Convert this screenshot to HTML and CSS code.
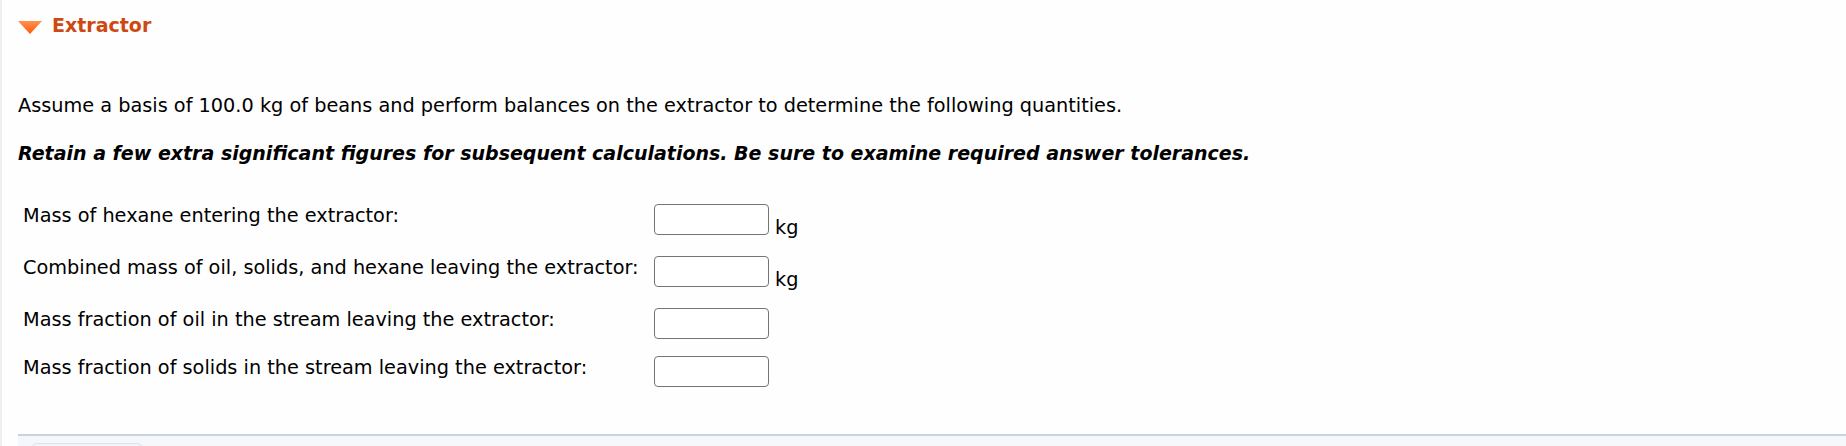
FILE: index.html
```html
<!DOCTYPE html>
<html lang="en">
  <head>
    <meta charset="UTF-8" />
    <meta name="viewport" content="width=device-width, initial-scale=1.0" />
    <link rel="stylesheet" href="styles.css">
    <title>Extractor</title>
  </head>

  <body>
    <main class="page">
      <h2 class="section__title">
        <svg class="section__arrow" width="24" height="13" viewBox="0 0 24 13">
          <defs>
            <linearGradient id="arrowFill" x1="0" y1="0" x2="0" y2="1">
              <stop offset="0" stop-color="#ff9250" />
              <stop offset="1" stop-color="#ff5a0a" />
            </linearGradient>
          </defs>
          <polygon points="0,0 24,0 12,13" fill="url(#arrowFill)" />
        </svg>
        Extractor
      </h2>

      <p class="question__text">
        Assume a basis of 100.0 kg of beans and perform balances on the extractor to determine the following quantities.
      </p>
      <p class="question__note">
        Retain a few extra significant figures for subsequent calculations. Be sure to examine required answer tolerances.
      </p>

      <div class="answers">
        <div class="answer">
          <label class="answer__label" for="q1">Mass of hexane entering the extractor:</label>
          <div class="answer__field">
            <input class="answer__input" id="q1" type="text" />
            <span class="answer__unit">kg</span>
          </div>
        </div>
        <div class="answer">
          <label class="answer__label" for="q2">Combined mass of oil, solids, and hexane leaving the extractor:</label>
          <div class="answer__field">
            <input class="answer__input" id="q2" type="text" />
            <span class="answer__unit">kg</span>
          </div>
        </div>
        <div class="answer">
          <label class="answer__label" for="q3">Mass fraction of oil in the stream leaving the extractor:</label>
          <div class="answer__field">
            <input class="answer__input" id="q3" type="text" />
          </div>
        </div>
        <div class="answer">
          <label class="answer__label" for="q4">Mass fraction of solids in the stream leaving the extractor:</label>
          <div class="answer__field">
            <input class="answer__input" id="q4" type="text" />
          </div>
        </div>
      </div>

      <div class="toolbar">
        <div class="toolbar__btn"></div>
      </div>
    </main>
  </body>
</html>
```

FILE: styles.css
```css
* {
  box-sizing: border-box;
}
html,
body {
  margin: 0;
  background-color: #fefefe;
}
body {
  font-family: Verdana, "DejaVu Sans", sans-serif;
  font-size: 19.3px;
  line-height: 23px;
  color: #000;
}
.page {
  border-left: 2px solid #efefef;
  padding: 14px 0 0 16px;
}
.section__title {
  display: flex;
  align-items: center;
  margin: 0;
  font-size: 19px;
  line-height: 23px;
  font-weight: bold;
  color: #cf4811;
}
.section__arrow {
  margin-right: 10px;
  margin-top: 3px;
}
.question__text {
  margin: 57px 0 0;
}
.question__note {
  margin: 25px 0 0;
  font-size: 19px;
  font-weight: bold;
  font-style: italic;
}
.answers {
  margin-top: 39px;
  padding-left: 5px;
}
.answer {
  display: flex;
  align-items: flex-start;
  margin-bottom: 17px;
}
.answer__label {
  width: 631px;
  flex-shrink: 0;
}
.answer__field {
  display: flex;
  align-items: flex-start;
}
.answer__input {
  width: 115px;
  height: 31px;
  margin: 0;
  border: 1px solid #747474;
  border-radius: 4px;
  background-color: #fff;
  font: inherit;
}
.answer__unit {
  margin: 12px 0 0 6px;
}
.toolbar {
  margin-top: 47px;
  height: 12px;
  overflow: hidden;
  border-top: 2px solid #c9d2df;
  background-color: #f5f7fa;
  padding: 7px 0 0 13px;
}
.toolbar__btn {
  width: 112px;
  height: 30px;
  border: 1px solid #dde3eb;
  border-radius: 6px;
  background-color: #f3f5f8;
}
```
